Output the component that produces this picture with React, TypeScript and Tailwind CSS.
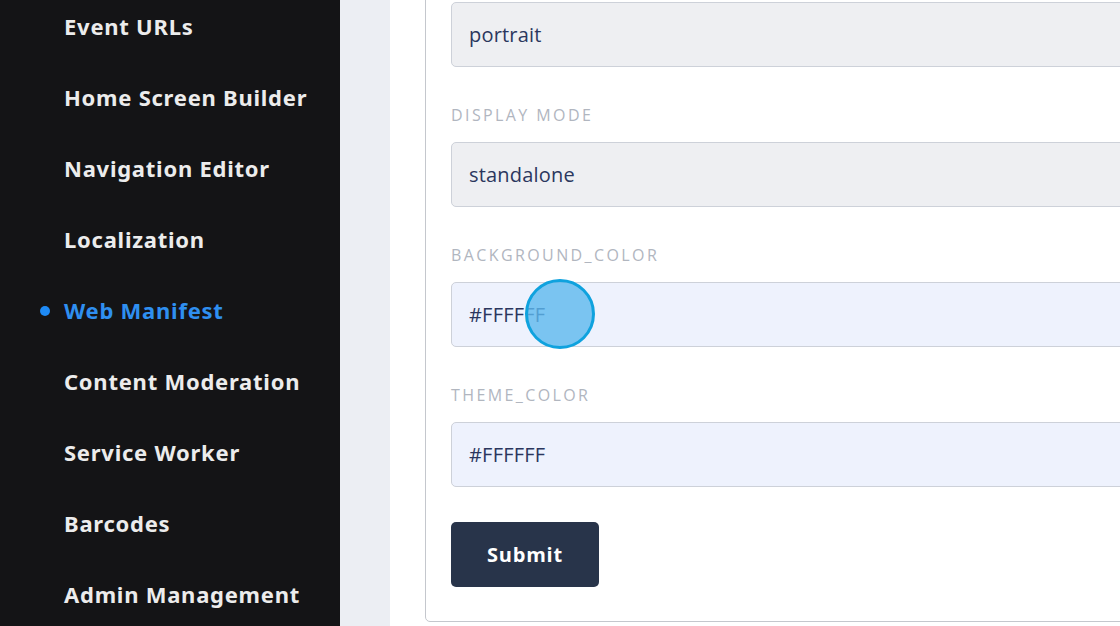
import React from "react";

const navItems = [
  "Event URLs",
  "Home Screen Builder",
  "Navigation Editor",
  "Localization",
  "Web Manifest",
  "Content Moderation",
  "Service Worker",
  "Barcodes",
  "Admin Management",
];

const fields = [
  { label: null, value: "portrait", tone: "gray" },
  { label: "DISPLAY MODE", value: "standalone", tone: "gray" },
  { label: "BACKGROUND_COLOR", value: "#FFFFFF", tone: "blue" },
  { label: "THEME_COLOR", value: "#FFFFFF", tone: "blue" },
];

const Sidebar: React.FC = () => (
  <aside className="w-[340px] shrink-0 bg-[#141416] overflow-hidden">
    <ul className="mt-[-9px]" style={{ fontFamily: '"Noto Sans", sans-serif' }}>
      {navItems.map((item) => {
        const active = item === "Web Manifest";
        return (
          <li
            key={item}
            className={`relative flex h-[71px] items-center pl-16 text-[22px] font-bold tracking-[0.75px] ${
              active ? "text-[#2f8ff0]" : "text-[#ececec]"
            }`}
          >
            {active && (
              <span className="absolute left-[40px] top-1/2 h-[10px] w-[10px] -translate-y-1/2 rounded-full bg-[#1e8af5]" />
            )}
            {item}
          </li>
        );
      })}
    </ul>
  </aside>
);

const Field: React.FC<{ label: string | null; value: string; tone: string }> = ({
  label,
  value,
  tone,
}) => (
  <div className={label ? "mt-9" : ""}>
    {label && (
      <div className="mb-[15px] h-6 text-[16px] leading-6 tracking-[2.4px] text-[#b1b6bf]">
        {label}
      </div>
    )}
    <div
      className={`flex h-[65px] items-center rounded-[5px] border border-[#cdd1d9] px-[17px] text-[20px] tracking-[0.2px] text-[#2b375e] ${
        tone === "blue" ? "bg-[#eef2fd]" : "bg-[#eeeff2]"
      }`}
    >
      {value}
    </div>
  </div>
);

export default function App() {
  return (
    <div className="flex h-[626px] w-[1120px] overflow-hidden bg-white">
      <Sidebar />
      <div className="w-[50px] shrink-0 bg-[#eceef3]" />
      <main
        className="relative flex-1 overflow-hidden pl-[35px]"
        style={{ fontFamily: '"Open Sans", "Noto Sans", sans-serif' }}
      >
        <div className="mt-[-40px] w-[900px] rounded-[5px] border-[1.5px] border-[#c4c7cd] pb-[34px] pl-[25px] pt-[41px]">
          {fields.map((f, i) => (
            <Field key={i} label={f.label} value={f.value} tone={f.tone} />
          ))}
          <button className="mt-[35px] h-[65px] w-[148px] rounded-[5px] bg-[#28344a] text-[20px] font-bold tracking-[0.8px] text-white">
            Submit
          </button>
        </div>
        <span className="absolute left-[135px] top-[279px] h-[70px] w-[70px] rounded-full border-[3px] border-[#0fa2de] bg-[#5cb8ee]/80" />
      </main>
    </div>
  );
}
